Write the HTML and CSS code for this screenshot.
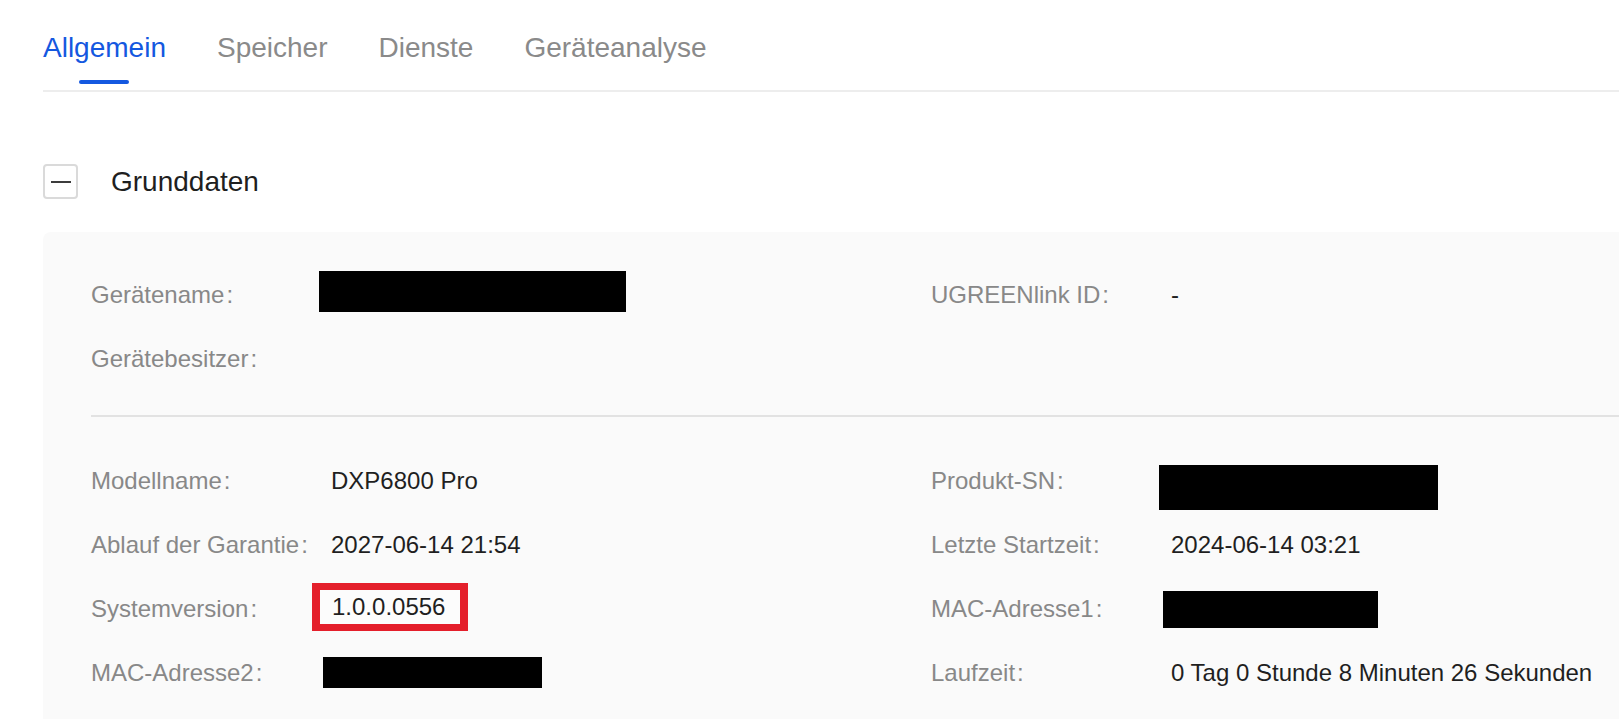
FILE: index.html
```html
<!DOCTYPE html>
<html lang="de">
<head>
<meta charset="utf-8">
<title>Allgemein</title>
<link rel="stylesheet" href="styles.css">
</head>
<body>
<div class="page">
  <nav class="tabs">
    <div class="tab active"><span class="tab-text">Allgemein</span><span class="tab-bar"></span></div>
    <div class="tab"><span class="tab-text">Speicher</span><span class="tab-bar"></span></div>
    <div class="tab"><span class="tab-text">Dienste</span><span class="tab-bar"></span></div>
    <div class="tab"><span class="tab-text">Geräteanalyse</span><span class="tab-bar"></span></div>
  </nav>

  <div class="section-head">
    <span class="toggle"><span class="toggle-line"></span></span>
    <h2 class="section-title">Grunddaten</h2>
  </div>

  <div class="card">
    <div class="row">
      <div class="cell"><span class="label">Gerätename<span class="colon">:</span></span><span class="value"><span class="redact r-name"></span></span></div>
      <div class="cell"><span class="label">UGREENlink ID<span class="colon">:</span></span><span class="value">-</span></div>
    </div>
    <div class="row">
      <div class="cell"><span class="label">Gerätebesitzer<span class="colon">:</span></span><span class="value"></span></div>
      <div class="cell"></div>
    </div>
    <div class="divider"></div>
    <div class="row">
      <div class="cell"><span class="label">Modellname<span class="colon">:</span></span><span class="value">DXP6800 Pro</span></div>
      <div class="cell"><span class="label">Produkt-SN<span class="colon">:</span></span><span class="value"><span class="redact r-sn"></span></span></div>
    </div>
    <div class="row">
      <div class="cell"><span class="label">Ablauf der Garantie<span class="colon">:</span></span><span class="value">2027-06-14 21:54</span></div>
      <div class="cell"><span class="label">Letzte Startzeit<span class="colon">:</span></span><span class="value">2024-06-14 03:21</span></div>
    </div>
    <div class="row">
      <div class="cell"><span class="label">Systemversion<span class="colon">:</span></span><span class="value"><span class="highlight">1.0.0.0556</span></span></div>
      <div class="cell"><span class="label">MAC-Adresse1<span class="colon">:</span></span><span class="value"><span class="redact r-mac1"></span></span></div>
    </div>
    <div class="row">
      <div class="cell"><span class="label">MAC-Adresse2<span class="colon">:</span></span><span class="value"><span class="redact r-mac2"></span></span></div>
      <div class="cell"><span class="label">Laufzeit<span class="colon">:</span></span><span class="value">0 Tag 0 Stunde 8 Minuten 26 Sekunden</span></div>
    </div>
  </div>
</div>
</body>
</html>
```

FILE: styles.css
```css
html, body {
  margin: 0;
  padding: 0;
  background: #ffffff;
  overflow: hidden;
}

body {
  font-family: "Liberation Sans", Arial, sans-serif;
  color: #222222;
  width: 1619px;
  height: 719px;
}

.page {
  padding-left: 43px;
}

/* Tabs */
.tabs {
  display: flex;
  gap: 51px;
  height: 92px;
  border-bottom: 2px solid #ededed;
  box-sizing: border-box;
}

.tab {
  display: flex;
  flex-direction: column;
  align-items: center;
  padding-top: 29px;
}

.tab-text {
  font-size: 28px;
  line-height: 37px;
  color: #8a8a8a;
  white-space: nowrap;
}

.tab-bar {
  margin-top: 14px;
  width: 50px;
  height: 4px;
  border-radius: 2px;
  background: transparent;
}

.tab.active .tab-text {
  color: #1458e0;
}

.tab.active .tab-bar {
  background: #1458e0;
}

/* Section header */
.section-head {
  display: flex;
  align-items: center;
  gap: 33px;
  margin-top: 72px;
}

.toggle {
  width: 35px;
  height: 35px;
  box-sizing: border-box;
  border: 2px solid #dadada;
  border-radius: 4px;
  display: flex;
  align-items: center;
  justify-content: center;
  background: #ffffff;
}

.toggle-line {
  width: 20px;
  height: 2px;
  background: #3c3c3c;
}

.section-title {
  margin: 0;
  font-size: 28px;
  font-weight: normal;
  line-height: 35px;
  color: #1f1f1f;
}

/* Card */
.card {
  margin-top: 33px;
  width: 1728px;
  height: 520px;
  background: #fafafa;
  border-radius: 8px 0 0 0;
  padding: 31px 0 0 48px;
  box-sizing: border-box;
}

.row {
  display: grid;
  grid-template-columns: 840px 840px;
}

.cell {
  display: flex;
  align-items: center;
  height: 64px;
}

.label {
  width: 240px;
  flex: none;
  font-size: 24px;
  color: #888888;
  white-space: nowrap;
}

.colon {
  margin-left: 2px;
}

.value {
  display: flex;
  align-items: center;
  font-size: 24px;
  color: #1f1f1f;
  white-space: nowrap;
}

.divider {
  height: 2px;
  background: #e2e2e2;
  margin: 24px 0 32px 0;
}

.redact {
  display: block;
  background: #000000;
}

.r-name {
  width: 307px;
  height: 41px;
  margin-left: -12px;
  margin-top: -7px;
}

.r-sn {
  width: 279px;
  height: 45px;
  margin-left: -12px;
  margin-top: 12px;
}

.r-mac1 {
  width: 215px;
  height: 37px;
  margin-left: -8px;
}

.r-mac2 {
  width: 219px;
  height: 31px;
  margin-left: -8px;
  margin-top: -2px;
}

.highlight {
  display: block;
  border: 7px solid #e41f2b;
  border-left-width: 8px;
  border-right-width: 8px;
  padding: 0 15px 0 12px;
  margin-left: -19px;
  margin-top: -4px;
  line-height: 34px;
  background: #fcfcfc;
}
```
